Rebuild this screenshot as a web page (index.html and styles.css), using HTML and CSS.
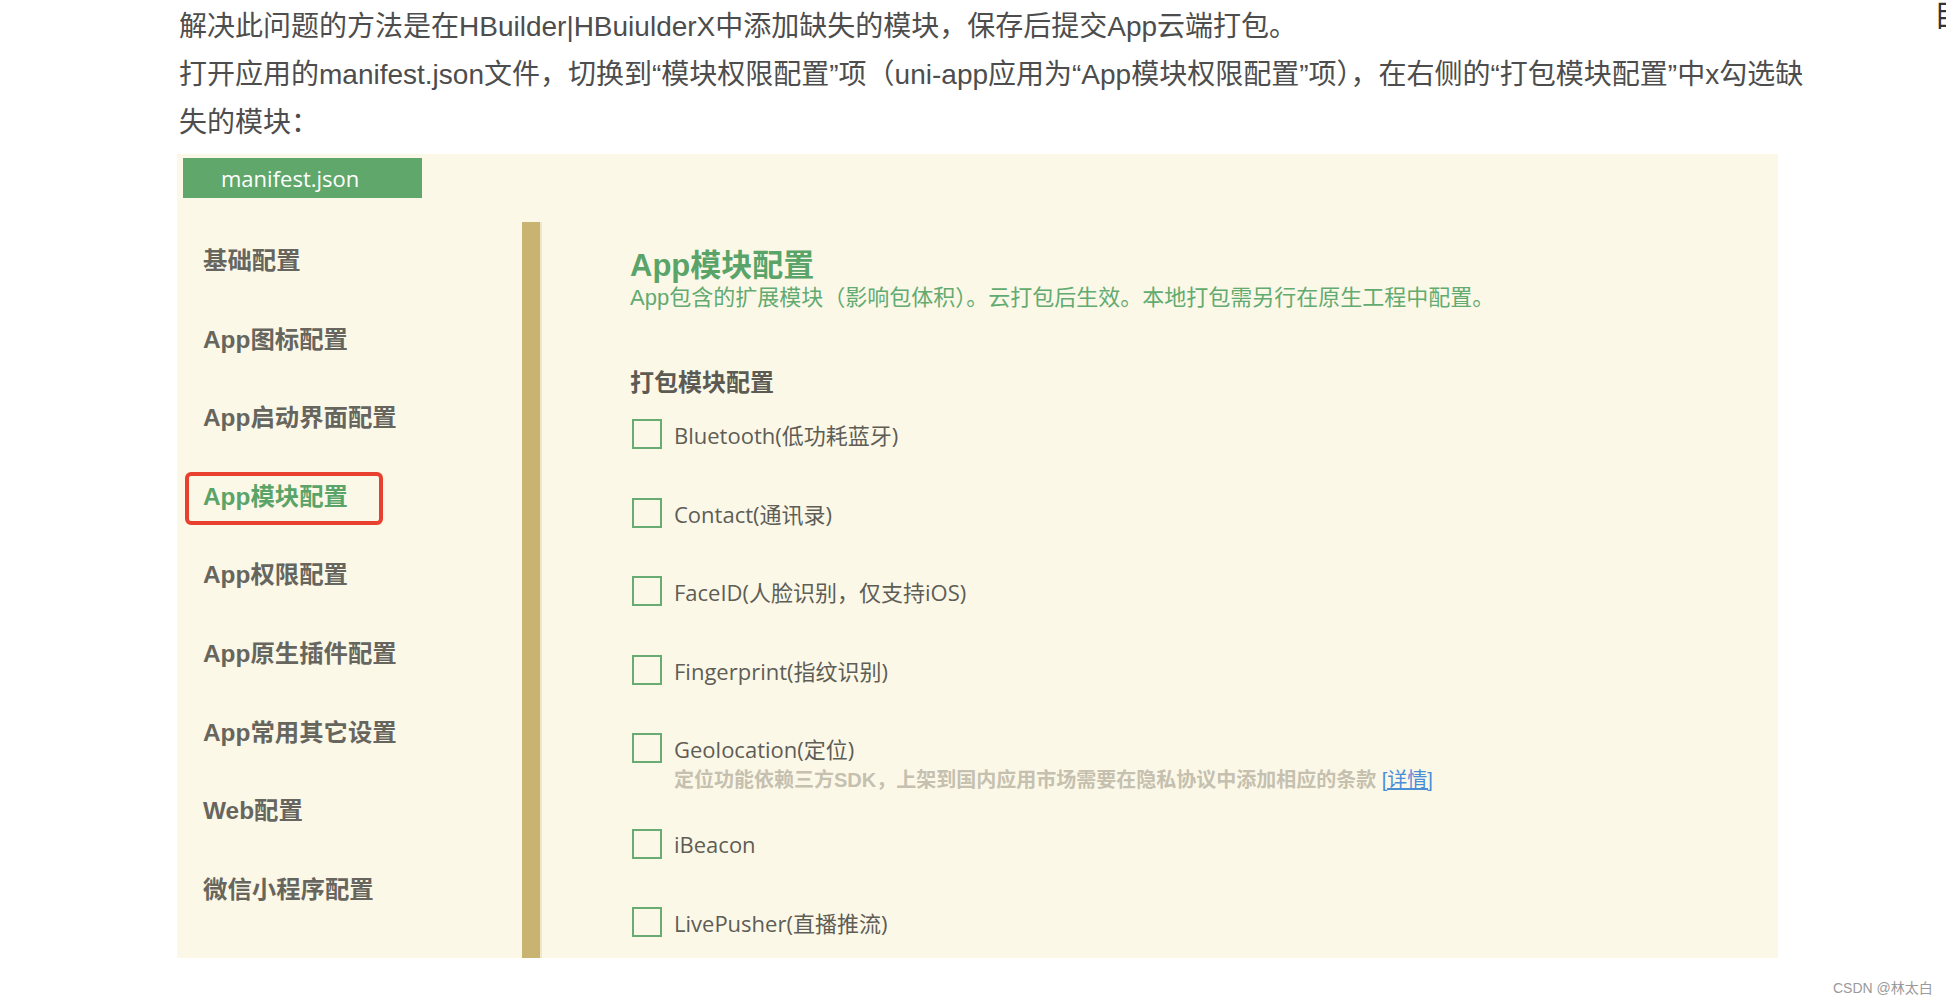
FILE: index.html
```html
<!DOCTYPE html>
<html lang="zh-CN">
<head>
<meta charset="utf-8">
<title>manifest.json 模块配置</title>
<link rel="stylesheet" href="styles.css">
</head>
<body>
<main class="article">
  <p class="para">解决此问题的方法是在HBuilder|HBuiulderX中添加缺失的模块，保存后提交App云端打包。</p>
  <p class="para">打开应用的manifest.json文件，切换到“模块权限配置”项（uni-app应用为“App模块权限配置”项），在右侧的“打包模块配置”中x勾选缺失的模块：</p>
  <div class="shot">
    <div class="tab">manifest.json</div>
    <div class="shot-body">
      <nav class="side">
        <div class="side-item">基础配置</div>
        <div class="side-item">App图标配置</div>
        <div class="side-item">App启动界面配置</div>
        <div class="side-item active">App模块配置<span class="mark"></span></div>
        <div class="side-item">App权限配置</div>
        <div class="side-item">App原生插件配置</div>
        <div class="side-item">App常用其它设置</div>
        <div class="side-item">Web配置</div>
        <div class="side-item">微信小程序配置</div>
      </nav>
      <div class="bar"></div>
      <section class="content">
        <h2 class="title">App模块配置</h2>
        <div class="subtitle">App包含的扩展模块（影响包体积）。云打包后生效。本地打包需另行在原生工程中配置。</div>
        <h3 class="group">打包模块配置</h3>
        <div class="opts">
          <div class="opt"><span class="box"></span><span class="lbl">Bluetooth(低功耗蓝牙)</span></div>
          <div class="opt"><span class="box"></span><span class="lbl">Contact(通讯录)</span></div>
          <div class="opt"><span class="box"></span><span class="lbl">FaceID(人脸识别，仅支持iOS)</span></div>
          <div class="opt"><span class="box"></span><span class="lbl">Fingerprint(指纹识别)</span></div>
          <div class="opt-wrap">
            <div class="opt"><span class="box"></span><span class="lbl">Geolocation(定位)</span></div>
            <div class="note">定位功能依赖三方SDK，上架到国内应用市场需要在隐私协议中添加相应的条款 <a class="link">[详情]</a></div>
          </div>
          <div class="opt"><span class="box"></span><span class="lbl">iBeacon</span></div>
          <div class="opt"><span class="box"></span><span class="lbl">LivePusher(直播推流)</span></div>
        </div>
      </section>
    </div>
  </div>
</main>
<div class="watermark">CSDN @林太白</div>
<div class="corner">目</div>
</body>
</html>
```

FILE: styles.css
```css
html, body {
  margin: 0;
  padding: 0;
  background: #ffffff;
}

body {
  width: 1946px;
  height: 1004px;
  overflow: hidden;
  position: relative;
  font-family: "Liberation Sans", "Noto Sans CJK SC", sans-serif;
}

.article {
  padding-top: 3px;
  padding-left: 179px;
  width: 1636px;
}

.para {
  margin: 0;
  font-size: 28px;
  line-height: 48px;
  color: #4d4d4d;
}

.shot {
  position: relative;
  margin-top: 7px;
  margin-left: -2px;
  width: 1601px;
  height: 804px;
  background: #fcf8e8;
  overflow: hidden;
  font-family: "Open Sans", "Noto Sans CJK SC", sans-serif;
}

.tab {
  margin: 4px 0 0 6px;
  width: 239px;
  height: 40px;
  box-sizing: border-box;
  padding-left: 38px;
  background: #5fa76a;
  color: #ffffff;
  font-size: 22px;
  line-height: 40px;
}

.shot-body {
  display: flex;
  margin-top: 24px;
  height: 736px;
}

.side {
  width: 345px;
  flex: none;
}

.side-item {
  position: relative;
  height: 78.6px;
  line-height: 78.6px;
  padding-left: 26px;
  font-family: "Liberation Sans", "Noto Sans CJK SC", sans-serif;
  font-size: 24.4px;
  font-weight: bold;
  color: #67665e;
}

.side-item.active {
  color: #5aa469;
}

.mark {
  position: absolute;
  left: 8px;
  top: 14px;
  width: 198px;
  height: 53px;
  box-sizing: border-box;
  border: 4px solid #e8412f;
  border-radius: 6px;
}

.bar {
  flex: none;
  width: 18px;
  height: 100%;
  background: #c9b370;
  border-right: 2px solid #efe7c8;
}

.content {
  padding-left: 88px;
  padding-top: 26px;
}

.title {
  margin: 0;
  font-family: "Liberation Sans", "Noto Sans CJK SC", sans-serif;
  font-size: 31px;
  line-height: 36px;
  font-weight: bold;
  color: #5aa469;
}

.subtitle {
  font-size: 22px;
  line-height: 28px;
  color: #62ab70;
  font-family: "Liberation Sans", "Noto Sans CJK SC", sans-serif;
}

.group {
  margin: 56px 0 0 0;
  font-family: "Liberation Sans", "Noto Sans CJK SC", sans-serif;
  font-size: 24px;
  line-height: 30px;
  font-weight: bold;
  color: #5c5b53;
}

.opts {
  margin-top: 21px;
  display: flex;
  flex-direction: column;
  gap: 48.5px;
}

.opt {
  display: flex;
  align-items: center;
  height: 30px;
  padding-left: 2px;
}

.box {
  width: 30px;
  height: 30px;
  box-sizing: border-box;
  border: 2px solid #68ab73;
  flex: none;
}

.lbl {
  margin-left: 12px;
  font-size: 22px;
  color: #5e5d56;
  white-space: nowrap;
}

.note {
  margin-top: 5px;
  margin-bottom: -12px;
  padding-left: 44px;
  font-family: "Liberation Sans", "Noto Sans CJK SC", sans-serif;
  font-size: 20px;
  line-height: 24px;
  font-weight: bold;
  color: #c5c0af;
  white-space: nowrap;
}

.link {
  color: #4a8ed8;
  font-weight: normal;
  text-decoration: underline;
}

.watermark {
  position: absolute;
  left: 1833px;
  top: 979px;
  font-family: "Liberation Sans", "Noto Sans CJK SC", sans-serif;
  font-size: 14px;
  line-height: 18px;
  color: #9a9a9a;
}

.corner {
  position: absolute;
  left: 1934px;
  top: -4px;
  font-family: "Noto Sans CJK SC", sans-serif;
  font-size: 30px;
  line-height: 34px;
  color: #333333;
}
```
